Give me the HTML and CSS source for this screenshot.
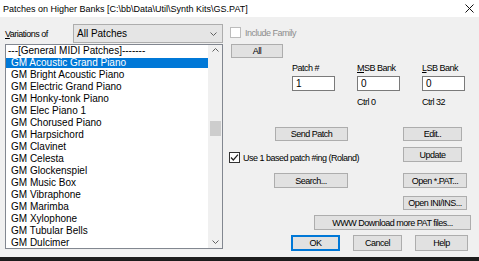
FILE: index.html
```html
<!DOCTYPE html>
<html lang="en">
<head>
    <meta charset="UTF-8">
    <meta name="viewport" content="width=device-width, initial-scale=1.0">
    <title>Patches on Higher Banks</title>
    <link rel="stylesheet" href="styles.css">
</head>
<body>
    <div class="dialog">
        <div class="titlebar">
            <span class="title">Patches on Higher Banks [C:\bb\Data\Util\Synth Kits\GS.PAT]</span>
            <svg class="close" width="9" height="9" viewBox="0 0 9 9"><path d="M0.5 0.5L8.5 8.5M8.5 0.5L0.5 8.5" stroke="#111" stroke-width="1" fill="none"/></svg>
        </div>

        <div class="content">
            <div class="left">
                <div class="variations">
                    <span class="lbl"><u>V</u>ariations of</span>
                    <div class="combo">
                        <span>All Patches</span>
                        <svg width="7" height="4" viewBox="0 0 7 4"><path d="M0.5 0.5L3.5 3.5L6.5 0.5" stroke="#606060" fill="none"/></svg>
                    </div>
                </div>

                <div class="listbox">
                    <ul class="items">
                        <li class="head">---[General MIDI Patches]-------</li>
                        <li class="sel">GM Acoustic Grand Piano</li>
                        <li>GM Bright Acoustic Piano</li>
                        <li>GM Electric Grand Piano</li>
                        <li>GM Honky-tonk Piano</li>
                        <li>GM Elec Piano 1</li>
                        <li>GM Chorused Piano</li>
                        <li>GM Harpsichord</li>
                        <li>GM Clavinet</li>
                        <li>GM Celesta</li>
                        <li>GM Glockenspiel</li>
                        <li>GM Music Box</li>
                        <li>GM Vibraphone</li>
                        <li>GM Marimba</li>
                        <li>GM Xylophone</li>
                        <li>GM Tubular Bells</li>
                        <li>GM Dulcimer</li>
                    </ul>
                    <div class="scrollbar">
                        <div class="arrow up"><svg width="7" height="4" viewBox="0 0 7 4"><path d="M0.5 3.5L3.5 0.5L6.5 3.5" stroke="#606060" fill="none"/></svg></div>
                        <div class="track"><div class="thumb"></div></div>
                        <div class="arrow"><svg width="7" height="4" viewBox="0 0 7 4"><path d="M0.5 0.5L3.5 3.5L6.5 0.5" stroke="#606060" fill="none"/></svg></div>
                    </div>
                </div>
            </div>

            <div class="right">
                <div class="include">
                    <span class="box disabled"></span>
                    <span>Include Family</span>
                </div>
                <button class="btn btn-all">All</button>

                <div class="bank">
                    <span>Patch #</span>
                    <span><u>M</u>SB Bank</span>
                    <span><u>L</u>SB Bank</span>
                    <div class="field">1</div>
                    <div class="field">0</div>
                    <div class="field">0</div>
                    <span class="ctrl"></span>
                    <span class="ctrl">Ctrl 0</span>
                    <span class="ctrl">Ctrl 32</span>
                </div>

                <div class="row row-send">
                    <button class="btn btn-send">Send Patch</button>
                    <button class="btn btn-side">Edit..</button>
                </div>

                <div class="row row-roland">
                    <label class="check">
                        <svg width="11" height="11" viewBox="0 0 11 11"><rect x="0.5" y="0.5" width="10" height="10" fill="#fff" stroke="#333"/><path d="M2 5.5L4.3 8L9 2.6" stroke="#222" stroke-width="1.2" fill="none"/></svg>
                        <span>Use 1 based patch #ing (Roland)</span>
                    </label>
                    <button class="btn btn-side tall">Update</button>
                </div>

                <div class="row row-search">
                    <button class="btn btn-search">Search...</button>
                    <button class="btn btn-open">Open *.PAT...</button>
                </div>

                <div class="row row-ini">
                    <button class="btn btn-open col2 short">Open INI/INS...</button>
                </div>

                <div class="row-www">
                    <button class="btn btn-www">WWW Download more PAT files...</button>
                </div>

                <div class="row-bottom">
                    <button class="btn btn-ok">OK</button>
                    <button class="btn btn-cancel">Cancel</button>
                    <button class="btn btn-help">Help</button>
                </div>
            </div>
        </div>
    </div>
</body>
</html>
```

FILE: styles.css
```css
body {
    margin: 0;
    font-family: "Liberation Sans", Arial, sans-serif;
    color: #000;
}
.dialog {
    width: 479px;
    height: 261px;
    box-sizing: border-box;
    background-color: #f0f0f0;
    border-bottom: 4px solid #1c1c1c;
    display: flex;
    flex-direction: column;
    overflow: hidden;
}
.titlebar {
    flex: none;
    height: 17px;
    background-color: #fff;
    display: flex;
    align-items: center;
    justify-content: space-between;
    padding: 0 5px 0 3px;
    font-size: 9px;
}
.content {
    flex: 1;
    display: grid;
    grid-template-columns: 218px 1fr;
    column-gap: 7px;
    padding: 7px 0 0 5px;
}

/* left side */
.left {
    display: flex;
    flex-direction: column;
}
.variations {
    display: flex;
    align-items: center;
    height: 19px;
}
.lbl {
    width: 68px;
    font-size: 9px;
    letter-spacing: -0.5px;
}
.combo {
    width: 150px;
    height: 19px;
    box-sizing: border-box;
    border: 1px solid #adadad;
    background-color: #e5e5e5;
    display: flex;
    align-items: center;
    justify-content: space-between;
    padding: 0 5px 0 3px;
    font-size: 10px;
}
.listbox {
    margin-top: 1px;
    height: 205px;
    box-sizing: border-box;
    border: 1px solid #828790;
    background-color: #fff;
    display: flex;
    overflow: hidden;
}
.items {
    list-style: none;
    margin: 0;
    padding: 0;
    flex: 1;
    font-size: 10px;
    line-height: 12px;
}
.items li {
    padding-left: 5px;
    white-space: nowrap;
}
.items .head {
    padding-left: 2px;
}
.items .sel {
    background-color: #0078d7;
    color: #fff;
    margin: 1px 0;
    line-height: 10px;
}
.scrollbar {
    width: 14px;
    background-color: #f0f0f0;
    display: flex;
    flex-direction: column;
}
.arrow {
    height: 13px;
    display: flex;
    align-items: center;
    justify-content: center;
}
.arrow.up {
    align-items: flex-start;
    padding-top: 3px;
    box-sizing: border-box;
}
.track {
    flex: 1;
}
.thumb {
    margin: 63px 0 0 2px;
    width: 11px;
    height: 15px;
    background-color: #cdcdcd;
}

/* right side */
.right {
    display: flex;
    flex-direction: column;
    font-size: 9px;
    letter-spacing: -0.5px;
}
.include {
    margin-top: 3px;
    height: 11px;
    display: flex;
    align-items: center;
    gap: 4px;
    color: #8d8d8d;
}
.box {
    width: 11px;
    height: 11px;
    box-sizing: border-box;
    border: 1px solid #bcbcbc;
    background-color: #fff;
}
.btn {
    box-sizing: border-box;
    padding: 0;
    background-color: #e1e1e1;
    border: 1px solid #adadad;
    font-family: inherit;
    font-size: 9px;
    letter-spacing: -0.5px;
    color: #000;
    height: 14px;
    display: flex;
    align-items: center;
    justify-content: center;
}
.btn-all {
    margin: 6px 0 0 1px;
    width: 52px;
}
.bank {
    display: grid;
    grid-template-columns: repeat(3, 43px);
    column-gap: 22px;
    margin: 5px 0 0 62px;
    line-height: 10px;
}
.field {
    margin-top: 3px;
    height: 15px;
    box-sizing: border-box;
    border: 1px solid #7a7a7a;
    background-color: #fff;
    padding-left: 3px;
    font-size: 10px;
    letter-spacing: 0;
    line-height: 13px;
}
.ctrl {
    margin-top: 6px;
}
.row {
    display: grid;
    grid-template-columns: 173px auto;
    align-items: start;
}
.col2 {
    grid-column: 2;
}
.row-send {
    margin-top: 20px;
}
.btn-send {
    margin-left: 45px;
    width: 73px;
}
.btn-side {
    width: 59px;
}
.tall {
    height: 15px;
}
.row-roland {
    margin-top: 6px;
}
.check {
    margin-left: -1px;
    padding-top: 5px;
    display: flex;
    align-items: center;
    gap: 3px;
}
.row-search {
    margin-top: 10px;
}
.btn-search {
    margin-left: 44px;
    width: 74px;
    height: 15px;
}
.btn-open {
    width: 64px;
    height: 15px;
}
.btn-open.short {
    height: 14px;
}
.row-ini {
    margin-top: 8px;
}
.row-www {
    margin-top: 5px;
}
.btn-www {
    margin-left: 84px;
    width: 157px;
    height: 15px;
}
.row-bottom {
    margin: 5px 0 0 61px;
    display: flex;
    gap: 13px;
}
.btn-ok,
.btn-cancel {
    width: 49px;
    height: 16px;
}
.btn-ok {
    border-color: #0078d7;
    box-shadow: inset 0 0 0 1px #0078d7;
}
.btn-help {
    width: 53px;
    height: 16px;
}
```
